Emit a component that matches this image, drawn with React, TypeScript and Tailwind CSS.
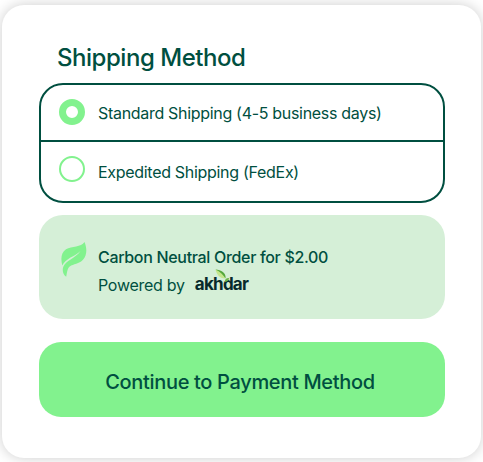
function Leaf() {
  return (
    <svg className="mt-[27px] ml-[22px] h-[36px] w-[26px] shrink-0" viewBox="0 0 26 36" fill="#82f28e">
      <path d="M23.5 0C26 6 26.3 13 22 17.8C18 22 12.5 22 8.7 24.4C6.3 26.2 6.3 29.5 5.2 34.8C2 32.5 1 28.5 2.3 24.8C4.6 18.6 14 16.7 19.5 9C13.5 14.8 4.8 16 1.3 23.5C-0.3 17.5 -0.2 10.5 5 7.2C11 3.8 20 5.5 23.5 0Z" />
    </svg>
  );
}

function Logo() {
  return (
    <span className="relative ml-[10px] inline-block h-[24px] w-[56px]">
      <span className="block text-[17px] leading-[24px] font-bold tracking-[-0.75px] whitespace-nowrap text-[#072a2b]">
        akhdar
      </span>
      <svg className="absolute -top-[3px] left-[20px] h-[15px] w-[15px]" viewBox="0 0 15 15">
        <path d="M0.5 0.5C2 6.5 5.5 9.5 10 9.5C10 4.5 6 1.5 0.5 0.5Z" fill="#c4e68c" />
        <path d="M0.5 0.5C6 1 11.5 3.5 10.5 9.5C8.5 6 5 2.5 0.5 0.5Z" fill="#55a83c" />
        <path d="M10 13C9.5 10.5 11.3 8.8 14 9C14 11.2 12.5 12.8 10 13Z" fill="#6fb54b" />
      </svg>
    </span>
  );
}

export default function App() {
  return (
    <main className="h-[462px] w-[483px] overflow-hidden bg-white px-[2px] pt-[5px] font-['Inter',sans-serif] text-[#004f40]">
      <section className="h-[453px] w-[479px] rounded-[22px] bg-white pt-[38px] pr-[36px] pl-[37px] shadow-[0_0_14px_rgba(0,0,0,0.2)]">
        <h1 className="pl-[18px] text-[24px] leading-[29px] font-[460] tracking-[-0.46px]">Shipping Method</h1>
        <div className="mt-[11px] h-[120px] rounded-[24px] border-2 border-[#004f40]">
          <label className="flex h-[57px] items-center border-b-2 border-[#004f40] pl-[18px]">
            <span className="mb-[2px] size-[26px] rounded-full border-[7px] border-[#82f28e]" />
            <span className="ml-[13px] text-[16px] leading-[22px] font-[370] tracking-[-0.31px] whitespace-nowrap">
              Standard Shipping (4-5 business days)
            </span>
          </label>
          <label className="flex h-[59px] items-center pl-[18px]">
            <span className="mb-[6px] size-[26px] rounded-full border-2 border-[#82f28e]" />
            <span className="ml-[13px] text-[16px] leading-[22px] font-[370] tracking-[-0.3px] whitespace-nowrap">
              Expedited Shipping (FedEx)
            </span>
          </label>
        </div>
        <div className="mt-[12px] flex h-[104px] rounded-[24px] bg-[#d5efd7]">
          <Leaf />
          <div className="ml-[11px] pt-[31px] text-[16px] leading-[22px] tracking-[-0.32px] whitespace-nowrap">
            <p className="font-[460]">Carbon Neutral Order for $2.00</p>
            <p className="mt-[4px] flex items-center">
              <span className="pt-[2px] font-[370] tracking-[-0.26px]">Powered by</span>
              <Logo />
            </p>
          </div>
        </div>
        <button className="mt-[23px] h-[75px] w-full rounded-[22px] bg-[#82f28e] pt-[5px] pr-[4px] text-[20px] leading-[26px] font-[460] tracking-[-0.33px]">
          Continue to Payment Method
        </button>
      </section>
    </main>
  );
}
